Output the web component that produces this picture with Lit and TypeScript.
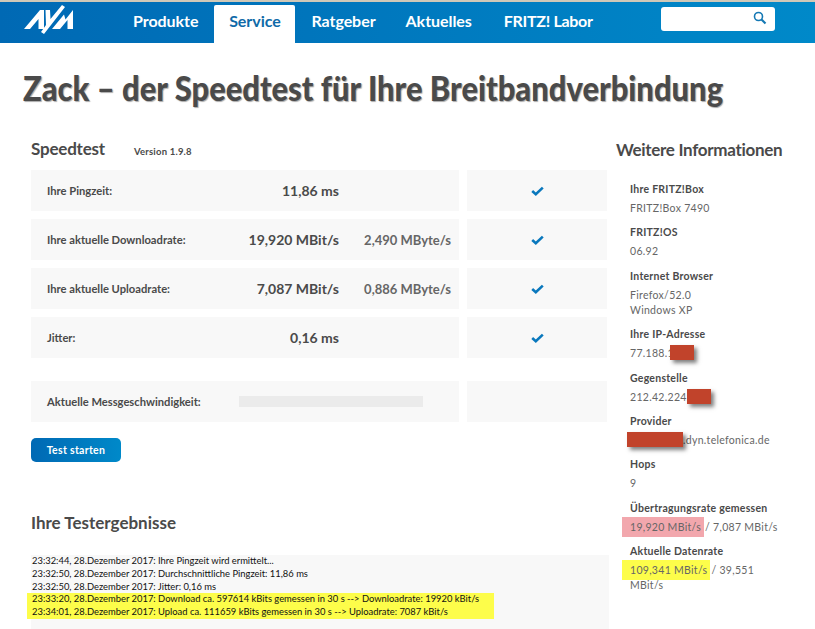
import { LitElement, html, css } from "lit";
import { customElement } from "lit/decorators.js";

const check = html`<svg class="check" width="13" height="10" viewBox="0 0 13 10"><path d="M1.2 5 L4.8 8.2 L11.8 1.6" fill="none" stroke="#0a78bd" stroke-width="2.6"/></svg>`;

const rows = [
  { label: "Ihre Pingzeit:", value: "11,86 ms", sub: "" },
  { label: "Ihre aktuelle Downloadrate:", value: "19,920 MBit/s", sub: "2,490 MByte/s" },
  { label: "Ihre aktuelle Uploadrate:", value: "7,087 MBit/s", sub: "0,886 MByte/s" },
  { label: "Jitter:", value: "0,16 ms", sub: "" },
];

@customElement("app-root")
export class AppRoot extends LitElement {
  static styles = css`
    :host { display: block; position: relative; width: 815px; height: 629px; overflow: hidden; background: #fff; font-family: "Lato", "Noto Sans", sans-serif; color: #4a4a4a; }
    .top { height: 43px; box-sizing: border-box; border-top: 2px solid #cfc8b8; background: linear-gradient(90deg, #0069b4, #0089c9); display: flex; align-items: flex-end; padding-left: 24px; }
    .logo { align-self: flex-start; margin-top: 3px; width: 49px; height: 30px; flex: none; }
    .nav { display: flex; margin-left: 45px; height: 38px; }
    .nav a { color: #fff; font-weight: 700; font-size: 16px; padding: 6px 15px 0; letter-spacing: -0.05px; }
    .nav a.on { background: #fff; color: #0f6aa8; width: 81px; box-sizing: border-box; text-align: center; padding: 6px 0 0; border-radius: 2px 2px 0 0; margin: 0 1px; }
    .nav a.fr { margin-left: 2px; letter-spacing: -0.3px; }
    .search { position: absolute; left: 661px; top: 7px; width: 114px; height: 24px; background: #fff; border-radius: 3px; }
    .search svg { position: absolute; left: 92px; top: 4px; }
    h1 { margin: 26px 0 0 23px; font-size: 34px; line-height: 38px; font-weight: 900; color: #4a4a4a; white-space: nowrap; text-shadow: 1px 1px 1px #aaa; transform: scaleX(0.91); transform-origin: left center; }
    .main { display: grid; grid-template-columns: 578px 1fr; column-gap: 7px; padding-left: 31px; margin-top: 30px; }
    .head { display: flex; align-items: baseline; height: 33px; }
    h2 { margin: 0; font-size: 17px; line-height: 24px; font-weight: 700; color: #4a4a4a; white-space: nowrap; }
    .head h2 { letter-spacing: -0.2px; }
    .ver { margin-left: 29px; font-size: 9.5px; font-weight: 700; letter-spacing: .2px; }
    .grid { display: grid; grid-template-columns: 428px 140px; column-gap: 8px; row-gap: 8px; width: 576px; }
    .cell { background: #f8f8f8; height: 41px; display: flex; align-items: center; justify-content: center; }
    .cell.l { justify-content: flex-start; padding-left: 16px; box-sizing: border-box; font-size: 11.2px; font-weight: 700; }
    .lab { width: 195px; white-space: nowrap; }
    .val { width: 97px; text-align: right; font-size: 14px; font-weight: 700; white-space: nowrap; }
    .sub { width: 112px; text-align: right; font-size: 13px; color: #666; white-space: nowrap; }
    .gap { height: 23px; grid-column: 1 / 3; margin-bottom: -8px; margin-top: -8px; }
    .bar { width: 184px; height: 11px; background: #ebebeb; margin-left: -3px; }
    .btn { display: block; margin-top: 16px; width: 90px; height: 24px; border: 0; border-radius: 5px; background: linear-gradient(90deg, #0069b4, #0089c9); color: #fff; font: 700 10.5px/24px "Lato", sans-serif; letter-spacing: .3px; padding: 0; }
    .res { margin-top: 49px; }
    .log { margin-top: 20px; width: 578px; height: 74px; background: #f8f8f8; box-sizing: border-box; font-size: 9.4px; line-height: 12.8px; color: #111; white-space: nowrap; }
    .log div { padding-left: 1px; }
    .hl { background: #fdfd4a; margin-left: -4px; width: 467px; padding-left: 5px !important; box-sizing: border-box; }
    .hl div { padding-left: 0; }
    aside { padding-top: 1px; }
    aside h2 { margin-left: 0; margin-bottom: 25px; height: 19px; line-height: 24px; letter-spacing: -0.3px; }
    dl { margin: 0; padding-left: 14px; font-size: 10.5px; }
    dt { font-weight: 700; color: #4a4a4a; letter-spacing: .25px; height: 14px; line-height: 14px; white-space: nowrap; }
    dd { margin: 5px 0 9.4px; line-height: 15px; color: #666; letter-spacing: .3px; min-height: 15px; white-space: nowrap; }
    .wrap { position: relative; display: inline-block; }
    .red { position: absolute; background: #c1432b; box-shadow: 3px 3px 4px rgba(0,0,0,.5); height: 15px; }
    .mark { padding: 4px 3px 4px 8px; margin: 0 -2px 0 -8px; }
    .pink { background: #f2a7ad; }
    .yel { background: #fdfd4a; }
  `;

  render() {
    return html`
      <div class="top">
        <svg class="logo" viewBox="0 0 49 30">
          <path fill="#fff" d="M0 24 L16 5 L20 5 L20 24 L14.5 24 L14.5 14 L6 24 Z"/>
          <path fill="#fff" d="M21.5 5 L26 5 L26.5 14 L38 0 L41 2 L20 29 L17 27 L22 20 Z"/>
          <path fill="#fff" d="M28 24 L40 9.5 L41.5 14.5 L49 5 L49 24 L43.5 24 L43.5 15 L36 24 Z"/>
        </svg>
        <nav class="nav">
          <a>Produkte</a><a class="on">Service</a><a>Ratgeber</a><a>Aktuelles</a><a class="fr">FRITZ! Labor</a>
        </nav>
        <div class="search">
          <svg width="14" height="14" viewBox="0 0 14 14"><circle cx="5.5" cy="5.5" r="4" fill="none" stroke="#1478b4" stroke-width="1.6"/><path d="M8.5 8.5 L12.5 12.5" stroke="#1478b4" stroke-width="2.2"/></svg>
        </div>
      </div>
      <h1>Zack – der Speedtest für Ihre Breitbandverbindung</h1>
      <div class="main">
        <section>
          <div class="head"><h2>Speedtest</h2><span class="ver">Version 1.9.8</span></div>
          <div class="grid">
            ${rows.map(r => html`
              <div class="cell l"><span class="lab">${r.label}</span><span class="val">${r.value}</span><span class="sub">${r.sub}</span></div>
              <div class="cell">${check}</div>`)}
            <div class="gap"></div>
            <div class="cell l"><span class="lab">Aktuelle Messgeschwindigkeit:</span><div class="bar"></div></div>
            <div class="cell"></div>
          </div>
          <button class="btn">Test starten</button>
          <h2 class="res">Ihre Testergebnisse</h2>
          <div class="log">
            <div>23:32:44, 28.Dezember 2017: Ihre Pingzeit wird ermittelt...</div>
            <div>23:32:50, 28.Dezember 2017: Durchschnittliche Pingzeit: 11,86 ms</div>
            <div>23:32:50, 28.Dezember 2017: Jitter: 0,16 ms</div>
            <div class="hl">
              <div>23:33:20, 28.Dezember 2017: Download ca. 597614 kBits gemessen in 30 s --> Downloadrate: 19920 kBit/s</div>
              <div>23:34:01, 28.Dezember 2017: Upload ca. 111659 kBits gemessen in 30 s --> Uploadrate: 7087 kBit/s</div>
            </div>
          </div>
        </section>
        <aside>
          <h2>Weitere Informationen</h2>
          <dl>
            <dt>Ihre FRITZ!Box</dt><dd>FRITZ!Box 7490</dd>
            <dt>FRITZ!OS</dt><dd>06.92</dd>
            <dt>Internet Browser</dt><dd>Firefox/52.0<br>Windows XP</dd>
            <dt>Ihre IP-Adresse</dt><dd><span class="wrap">77.188.1<span class="red" style="left:40px;top:-1px;width:24px"></span></span></dd>
            <dt>Gegenstelle</dt><dd><span class="wrap">212.42.224.<span class="red" style="left:57px;top:-1px;width:24px"></span></span></dd>
            <dt>Provider</dt><dd><span class="wrap" style="padding-left:53px">.dyn.telefonica.de<span class="red" style="left:-3px;top:-1px;width:56px"></span></span></dd>
            <dt>Hops</dt><dd>9</dd>
            <dt>Übertragungsrate gemessen</dt><dd><span class="mark pink">19,920 MBit/s</span> / 7,087 MBit/s</dd>
            <dt>Aktuelle Datenrate</dt><dd><span class="mark yel">109,341 MBit/s</span> / 39,551<br>MBit/s</dd>
          </dl>
        </aside>
      </div>
    `;
  }
}
